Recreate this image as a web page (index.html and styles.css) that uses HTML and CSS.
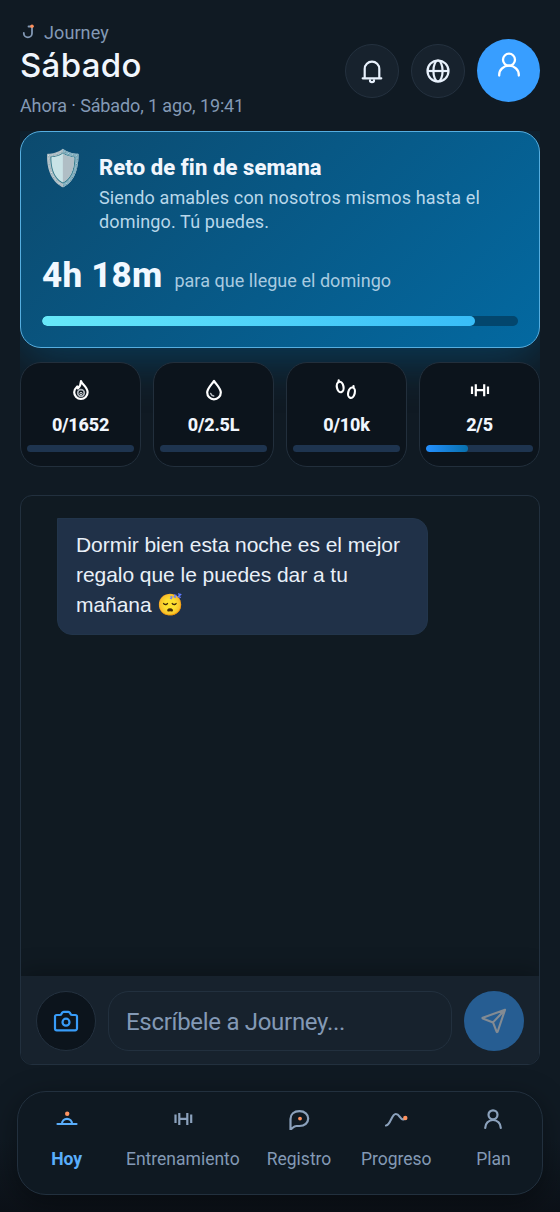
FILE: index.html
```html
<!DOCTYPE html>
<html lang="es">
<head>
<meta charset="utf-8">
<title>Journey</title>
<link rel="stylesheet" href="styles.css">
</head>
<body>
<div class="app">
  <header class="header">
    <div class="heading">
      <div class="brand">
        <svg class="logo" viewBox="0 0 16 18" fill="none"><path d="M12 4.500v5.700a4.100 4.100 0 0 1-8.200 0V9.900M8.500 3.500h2.500" stroke="#8399b5" stroke-width="1.800" stroke-linecap="round"/><circle cx="12" cy="3.300" r="1.800" fill="#ff8f5a"/></svg>
        <span>Journey</span>
      </div>
      <h1 class="title">Sábado</h1>
      <p class="now">Ahora · Sábado, 1 ago, 19:41</p>
    </div>
    <div class="actions">
      <button class="round" aria-label="Avisos"><svg width="26" height="26" viewBox="0 0 26 26" fill="none" stroke="#e8f1fc" stroke-width="2.200" stroke-linecap="round" stroke-linejoin="round"><path d="M3.700 20.300h18.600M5.700 20V11a7.300 7.300 0 0 1 14.600 0v9M11 22.500a2 1.600 0 0 0 4 0"/></svg></button>
      <button class="round" aria-label="Idioma"><svg width="26" height="26" viewBox="0 0 26 26" fill="none" stroke="#e8f1fc" stroke-width="2.200"><circle cx="13" cy="13" r="10.500"/><ellipse cx="13" cy="13" rx="4.600" ry="10.500"/><path d="M2.500 13h21"/></svg></button>
      <button class="avatar" aria-label="Perfil"><svg width="26" height="28" viewBox="0 0 26 28" fill="none" stroke="#fff" stroke-width="2.300" stroke-linecap="round"><circle cx="13" cy="8.700" r="6"/><path d="M3.200 24.500v-.8a9.800 9 0 0 1 19.600 0v.8"/></svg></button>
    </div>
  </header>

  <main class="main">
    <section class="challenge">
      <div class="challenge-top">
        <span class="shield">🛡️</span>
        <div>
          <h2 class="challenge-title">Reto de fin de semana</h2>
          <p class="challenge-text">Siendo amables con nosotros mismos hasta el domingo. Tú puedes.</p>
        </div>
      </div>
      <div class="countdown"><strong class="time">4h 18m</strong><span>para que llegue el domingo</span></div>
      <div class="challenge-bar"><div class="challenge-fill" style="width:91%"></div></div>
    </section>

    <section class="stats">
      <div class="stat"><svg class="stat-icon" viewBox="0 0 24 24" fill="none" stroke="#fff" stroke-width="2.200" stroke-linejoin="round"><path d="M12 3c.8 3.500 6.600 6 6.600 11.300a6.700 6.700 0 0 1-13.400 0c0-2.700 1.500-4.400 3-5.800l.7 2c2-2 3-4 3.100-7.500Z"/><circle cx="12" cy="15" r="3.300" stroke="#aeb4ba" stroke-width="1.700"/><circle cx="12" cy="15.500" r="1.200" stroke="#dce0e3" stroke-width="1"/></svg><b>0/1652</b><div class="meter"></div></div>
      <div class="stat"><svg class="stat-icon" viewBox="0 0 24 24" fill="none" stroke="#fff" stroke-width="2.200" stroke-linejoin="round" stroke-linecap="round"><path d="M12 3C9.500 6.600 5.200 10.500 5.200 14.500a6.800 6.800 0 0 0 13.600 0C18.800 10.500 14.500 6.600 12 3Z"/><path d="M8.700 15.500a4 4 0 0 0 3 2.600" stroke="#b9bec3" stroke-width="1.500"/></svg><b>0/2.5L</b><div class="meter"></div></div>
      <div class="stat"><svg class="stat-icon" viewBox="0 0 24 24" fill="none" stroke="#fff" stroke-width="2.200" stroke-linecap="round"><ellipse cx="5.200" cy="9" rx="3.300" ry="5.300" transform="rotate(-12 5.200 9)"/><ellipse cx="16.500" cy="14.700" rx="3.300" ry="5.300" transform="rotate(14 16.500 14.700)"/><path d="M3.700 3.500V2.300M18.500 9V8"/></svg><b>0/10k</b><div class="meter"></div></div>
      <div class="stat"><svg class="stat-icon" viewBox="0 0 24 24" fill="none" stroke="#fff" stroke-width="2.200" stroke-linecap="butt"><path d="M4 8.500v7.600M7.800 6.200v12.100M16.200 6.200v12.100M20 8.500v7.600M7.800 12.200h8.400"/></svg><b>2/5</b><div class="meter"><div class="meter-fill" style="width:39%"></div></div></div>
    </section>

    <section class="chat">
      <div class="messages"><p class="bubble">Dormir bien esta noche es el mejor regalo que le puedes dar a tu mañana 😴</p></div>
      <div class="composer">
        <button class="camera" aria-label="Cámara"><svg width="28" height="28" viewBox="0 0 28 28" fill="none" stroke="#389cf8" stroke-width="2.200" stroke-linejoin="round"><path d="M3 9.500a1.500 1.500 0 0 1 1.500-1.500h3.300q1.200 0 1.800-1.300l.4-.8q.6-1 1.700-1h4.600q1.100 0 1.700 1l.4.8q.6 1.300 1.800 1.300h3.300a1.500 1.500 0 0 1 1.500 1.500v12a1.800 1.800 0 0 1-1.800 1.800H4.800A1.800 1.800 0 0 1 3 21.500Z"/><circle cx="14" cy="15.200" r="3.500"/></svg></button>
        <div class="input">Escríbele a Journey...</div>
        <button class="send" aria-label="Enviar"><svg width="28" height="28" viewBox="0 0 28 28" fill="none" stroke="#838b93" stroke-width="2.100" stroke-linejoin="round" stroke-linecap="round"><path d="M25 2.800 2.800 10.700q-.8.400 0 .8l10.200 3.900 3.600 9.200q.6 1 1.100-.1ZM25 2.800 13 15.400"/></svg></button>
      </div>
    </section>
  </main>

  <nav class="nav">
    <a class="tab active"><svg class="tab-icon" viewBox="0 0 24 24" fill="none" stroke="#5aaefb" stroke-width="2.200" stroke-linecap="round"><path d="M2.500 18h19M7 17.500a5 4.700 0 0 1 10 0"/><circle cx="12.200" cy="7.800" r="2.200" fill="#ff9360" stroke="none"/></svg><span>Hoy</span></a>
    <a class="tab"><svg class="tab-icon" viewBox="0 0 24 24" fill="none" stroke="#8ba1bc" stroke-width="2.200"><path d="M4.500 8.400v8.700M8.300 7v12M16.300 7v12M20.200 8.400v8.700M8.300 12.800h8"/></svg><span>Entrenamiento</span></a>
    <a class="tab"><svg class="tab-icon" viewBox="0 0 24 24" fill="none" stroke="#8ba1bc" stroke-width="2.200" stroke-linejoin="round" stroke-linecap="round"><path d="M3.500 23.500v-10.500c0-4.700 3.500-7.800 9-7.800 5.300 0 8.700 3.200 8.700 7.400s-3.500 7.400-8.700 7.400H9.500c-2.800 0-3.700 2-6 3.500Z"/><circle cx="13" cy="12.600" r="1.900" fill="#ff9360" stroke="none"/></svg><span>Registro</span></a>
    <a class="tab"><svg class="tab-icon" viewBox="0 0 24 24" fill="none" stroke="#8ba1bc" stroke-width="2.200" stroke-linecap="round"><path d="M2 19.500c5-.7 5.300-11.500 9.800-11.500 3.700 0 4.200 5.300 7 5.300h1.200"/><circle cx="21.300" cy="12" r="2.200" fill="#ff9360" stroke="none"/></svg><span>Progreso</span></a>
    <a class="tab"><svg class="tab-icon" viewBox="0 0 24 24" fill="none" stroke="#8ba1bc" stroke-width="2.200" stroke-linecap="round"><circle cx="12" cy="8.800" r="4.500"/><path d="M4.200 22a7.800 8 0 0 1 15.600 0"/></svg><span>Plan</span></a>
  </nav>
</div>
</body>
</html>
```
FILE: styles.css
```css
* { box-sizing: border-box; margin: 0; }
body { background: #101a23; color: #f1f6fd; font-family: Roboto, sans-serif; }
button { padding: 0; border: 0; display: flex; align-items: center; justify-content: center; flex: none; }
.app { height: 1212px; display: flex; flex-direction: column; background: linear-gradient(#101a23 0, #101a23 94%, #0c1118 100%); overflow: hidden; }
.header { height: 131px; padding: 0 20px; display: flex; justify-content: space-between; flex: none; }
.heading { padding-top: 21px; }
.brand { display: flex; align-items: center; gap: 8px; height: 22px; font-size: 18px; letter-spacing: .1px; color: #8399b5; }
.logo { width: 16px; height: 18px; }
.title { font: 500 33px/45px Inter, sans-serif; color: #f1f6fd; letter-spacing: .3px; }
.now { margin-top: 7px; font-size: 18px; line-height: 22px; letter-spacing: -.12px; color: #8399b5; }
.actions { display: flex; align-items: center; gap: 12px; padding-top: 10px; }
.round { width: 54px; height: 54px; border-radius: 50%; background: #17222d; border: 1px solid #24313f; }
.avatar { width: 63px; height: 63px; border-radius: 50%; background: #389eff; padding-bottom: 11px; }
.main { margin: 0 20px; display: flex; flex-direction: column; overflow: hidden; flex: none; height: 935px; }
.challenge { height: 217px; flex: none; padding: 14px 21px; border: 1px solid #56aee0; border-radius: 21px; background: linear-gradient(135deg, #0c4a6e, #0369a1); box-shadow: 0 12px 48px rgba(3, 105, 161, .42); }
.challenge-top { display: flex; height: 101px; }
.shield { width: 57px; flex: none; font-size: 35px; line-height: 46px; margin-left: -1px; margin-right: 1px; }
.challenge-title { margin-top: 9px; font-size: 22px; line-height: 26px; font-weight: 800; letter-spacing: .1px; }
.challenge-text { margin-top: 5px; font-size: 18px; line-height: 24px; letter-spacing: .15px; color: #b8d7ea; }
.countdown { display: flex; align-items: baseline; gap: 12px; height: 43px; margin-top: 7px; font-size: 18px; letter-spacing: .04px; color: #a9cbe0; }
.time { font-size: 35px; line-height: 43px; font-weight: 800; color: #f1f8ff; letter-spacing: .2px; }
.challenge-bar { margin-top: 19px; height: 10px; border-radius: 5px; background: #03466d; overflow: hidden; }
.challenge-fill { height: 10px; border-radius: 5px; background: linear-gradient(90deg, #67e8f9, #38bdf8); }
.stats { display: grid; grid-template-columns: repeat(4, 1fr); gap: 12px; margin-top: 14px; flex: none; position: relative; }
.stat { height: 105px; border-radius: 21px; border: 1px solid #222f3c; background: #0c141c; padding: 15px 6px 0; display: flex; flex-direction: column; align-items: center; font-size: 18px; line-height: 24px; letter-spacing: -.2px; }
.stat-icon { width: 24px; height: 24px; margin-bottom: 11px; }
.stat b { font-weight: 800; }
.meter { align-self: stretch; height: 7px; margin-top: 8px; border-radius: 4px; background: #1e344f; overflow: hidden; }
.meter-fill { height: 7px; border-radius: 4px; background: linear-gradient(90deg, #2490ff, #0870ac); }
.chat { position: relative; flex: none; height: 570px; margin-top: 28px; border: 1px solid #22303e; border-radius: 12px; background: #101a22; overflow: hidden; display: flex; flex-direction: column; }
.messages { flex: 1; padding: 22px 36px; }
.bubble { width: 371px; height: 117px; padding: 11px 18px; border-radius: 0 15px 15px 15px; background: #203148; border: 1px solid #22354b; font: 21px/30px "Liberation Sans", "Noto Color Emoji", sans-serif; letter-spacing: -.05px; color: #e9f0f8; }
.composer { height: 88px; padding: 15px 15px 13px; background: #17222d; box-shadow: 0 -6px 20px rgba(0, 0, 0, .25); display: flex; gap: 12px; }
.camera { width: 60px; height: 60px; border-radius: 50%; border: 1px solid #24313f; background: #0c141c; }
.input { flex: 1; height: 60px; border: 1px solid #22303e; border-radius: 21px; padding-left: 17px; font-size: 24px; line-height: 60px; letter-spacing: -.3px; color: #8399b5; }
.send { width: 60px; height: 60px; border-radius: 50%; background: #265d92; }
.nav { margin: 25px 17px 0; height: 104px; flex: none; display: grid; grid-template-columns: 97fr 135fr 97fr 97fr 97fr; border: 1px solid #22303e; border-radius: 29px; background: #0f1922; box-shadow: 0 8px 30px rgba(0, 0, 0, .4); padding-top: 14px; }
.tab { display: flex; flex-direction: column; align-items: center; gap: 17px; font-size: 17.500px; line-height: 24px; color: #8399b5; }
.tab-icon { width: 24px; height: 24px; }
.active { color: #5aaefb; font-weight: 700; }
```
